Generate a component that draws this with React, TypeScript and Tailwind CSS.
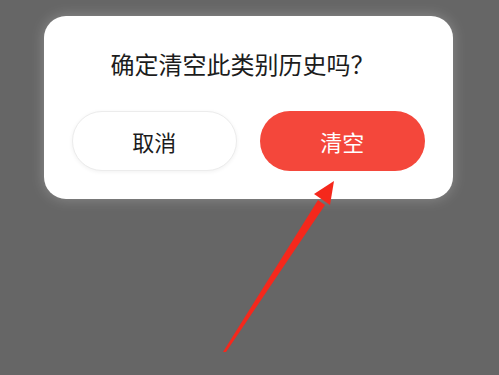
const FONT = { fontFamily: '"Noto Sans CJK SC", "Noto Sans", sans-serif' };

/** Red annotation arrow drawn over the screenshot */
function Arrow() {
  return (
    <svg className="absolute left-0 top-0 pointer-events-none" width="499" height="375" viewBox="0 0 499 375">
      {/* tapered shaft */}
      <path d="M223,352 L318,200 L325,205 L226,352 Z" fill="#f5281c" />
      {/* head */}
      <path d="M334,181 L314,194 L330,205 Z" fill="#f5281c" />
    </svg>
  );
}

export default function App() {
  return (
    <div className="relative w-[499px] h-[375px] overflow-hidden bg-[#666666]" style={FONT}>
      <div className="pl-[44px] pt-[16px]">
        <div className="w-[409px] rounded-[22px] bg-white pt-[32px] pb-[28px] px-[28px] flex flex-col shadow-[0_0_14px_rgba(255,255,255,0.25)]">
          <h2 className="text-center text-[24px] leading-[32px] text-[#1c1c1c] pr-[12px]">
            确定清空此类别历史吗？
          </h2>
          <div className="mt-[31px] flex gap-[23px]">
            <button className="w-[165px] h-[60px] rounded-full bg-white border border-[#ececec] shadow-[0_1px_4px_rgba(0,0,0,0.06)] text-[22px] text-[#1c1c1c]">
              取消
            </button>
            <button className="w-[166px] h-[60px] rounded-full bg-[#f4473b] text-[22px] text-white">
              清空
            </button>
          </div>
        </div>
      </div>
      <Arrow />
    </div>
  );
}
